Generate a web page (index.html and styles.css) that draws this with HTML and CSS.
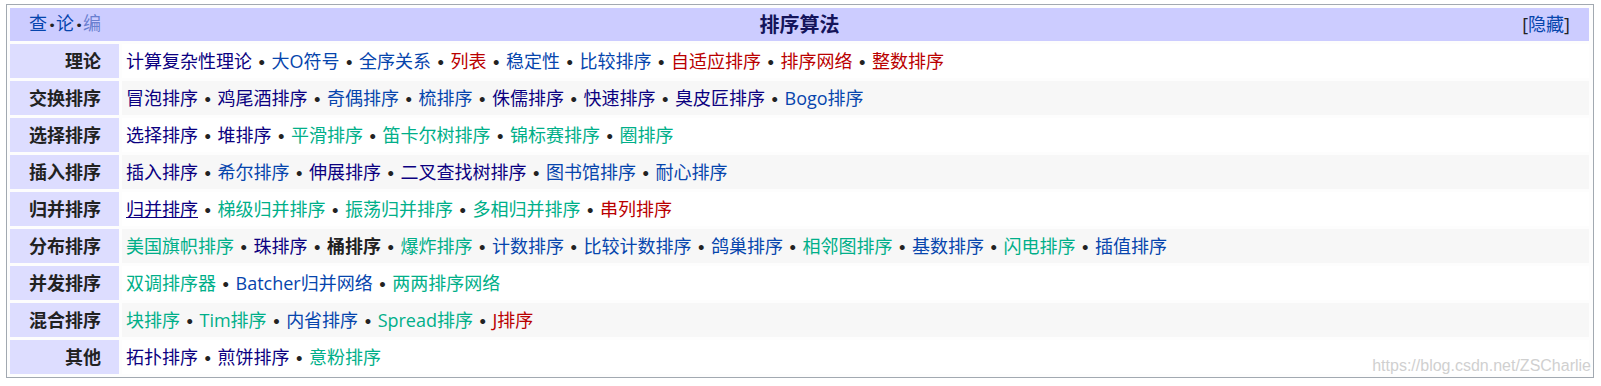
FILE: index.html
```html
<!DOCTYPE html>
<html lang="zh-CN">
<head>
<meta charset="utf-8">
<title>排序算法</title>
<link rel="stylesheet" href="styles.css">
</head>
<body>
<div class="navbox">
  <div class="navbox-inner">
    <div class="navbox-title">
      <div class="navbar"><a class="blue" href="#">查</a><span class="nsep">•</span><a class="blue" href="#">论</a><span class="nsep">•</span><a class="light" href="#">编</a></div>
      <div class="title-text">排序算法</div>
      <div class="toggle">[<a class="blue" href="#">隐藏</a>]</div>
    </div>

    <div class="group">理论</div>
    <div class="list odd"><a class="navy" href="#">计算复杂性理论</a><span class="sep">•</span><a class="blue" href="#">大O符号</a><span class="sep">•</span><a class="blue" href="#">全序关系</a><span class="sep">•</span><a class="red" href="#">列表</a><span class="sep">•</span><a class="blue" href="#">稳定性</a><span class="sep">•</span><a class="blue" href="#">比较排序</a><span class="sep">•</span><a class="red" href="#">自适应排序</a><span class="sep">•</span><a class="red" href="#">排序网络</a><span class="sep">•</span><a class="red" href="#">整数排序</a></div>

    <div class="group">交换排序</div>
    <div class="list even"><a class="navy" href="#">冒泡排序</a><span class="sep">•</span><a class="navy" href="#">鸡尾酒排序</a><span class="sep">•</span><a class="blue" href="#">奇偶排序</a><span class="sep">•</span><a class="blue" href="#">梳排序</a><span class="sep">•</span><a class="navy" href="#">侏儒排序</a><span class="sep">•</span><a class="navy" href="#">快速排序</a><span class="sep">•</span><a class="navy" href="#">臭皮匠排序</a><span class="sep">•</span><a class="blue" href="#">Bogo排序</a></div>

    <div class="group">选择排序</div>
    <div class="list odd"><a class="navy" href="#">选择排序</a><span class="sep">•</span><a class="navy" href="#">堆排序</a><span class="sep">•</span><a class="green" href="#">平滑排序</a><span class="sep">•</span><a class="green" href="#">笛卡尔树排序</a><span class="sep">•</span><a class="green" href="#">锦标赛排序</a><span class="sep">•</span><a class="green" href="#">圈排序</a></div>

    <div class="group">插入排序</div>
    <div class="list even"><a class="navy" href="#">插入排序</a><span class="sep">•</span><a class="blue" href="#">希尔排序</a><span class="sep">•</span><a class="navy" href="#">伸展排序</a><span class="sep">•</span><a class="navy" href="#">二叉查找树排序</a><span class="sep">•</span><a class="blue" href="#">图书馆排序</a><span class="sep">•</span><a class="blue" href="#">耐心排序</a></div>

    <div class="group">归并排序</div>
    <div class="list odd"><a class="navy under" href="#">归并排序</a><span class="sep">•</span><a class="green" href="#">梯级归并排序</a><span class="sep">•</span><a class="green" href="#">振荡归并排序</a><span class="sep">•</span><a class="green" href="#">多相归并排序</a><span class="sep">•</span><a class="red" href="#">串列排序</a></div>

    <div class="group">分布排序</div>
    <div class="list even"><a class="green" href="#">美国旗帜排序</a><span class="sep">•</span><a class="navy" href="#">珠排序</a><span class="sep">•</span><strong class="self">桶排序</strong><span class="sep">•</span><a class="green" href="#">爆炸排序</a><span class="sep">•</span><a class="blue" href="#">计数排序</a><span class="sep">•</span><a class="blue" href="#">比较计数排序</a><span class="sep">•</span><a class="blue" href="#">鸽巢排序</a><span class="sep">•</span><a class="green" href="#">相邻图排序</a><span class="sep">•</span><a class="blue" href="#">基数排序</a><span class="sep">•</span><a class="green" href="#">闪电排序</a><span class="sep">•</span><a class="blue" href="#">插值排序</a></div>

    <div class="group">并发排序</div>
    <div class="list odd"><a class="green" href="#">双调排序器</a><span class="sep">•</span><a class="blue" href="#">Batcher归并网络</a><span class="sep">•</span><a class="green" href="#">两两排序网络</a></div>

    <div class="group">混合排序</div>
    <div class="list even"><a class="green" href="#">块排序</a><span class="sep">•</span><a class="green" href="#">Tim排序</a><span class="sep">•</span><a class="blue" href="#">内省排序</a><span class="sep">•</span><a class="green" href="#">Spread排序</a><span class="sep">•</span><a class="red" href="#">J排序</a></div>

    <div class="group">其他</div>
    <div class="list odd"><a class="navy" href="#">拓扑排序</a><span class="sep">•</span><a class="navy" href="#">煎饼排序</a><span class="sep">•</span><a class="green" href="#">意粉排序</a></div>
  </div>
  <div class="watermark">https://blog.csdn.net/ZSCharlie</div>
</div>
</body>
</html>
```

FILE: styles.css
```css
html, body {
  margin: 0;
  padding: 0;
  background: #ffffff;
}

body {
  font-family: "Open Sans", "Noto Sans CJK SC", sans-serif;
  font-size: 18px;
  color: #222222;
}

a {
  text-decoration: none;
}

.navbox {
  position: relative;
  margin: 4px 7px 0 6px;
  border: 1px solid #a2a9b1;
  padding: 3px 4px 3px 3px;
  background: #fdfdfd;
}

.navbox-inner {
  display: grid;
  grid-template-columns: 109px 1fr;
  gap: 3px;
}

.navbox-title {
  grid-column: 1 / span 2;
  display: grid;
  grid-template-columns: 1fr auto 1fr;
  align-items: center;
  background: #ccccff;
  height: 33px;
  padding: 0 19px;
}

.navbar {
  justify-self: start;
  font-size: 18px;
  line-height: 27px;
}

.nsep {
  display: inline-block;
  width: 9px;
  text-align: right;
  font-family: "DejaVu Sans", sans-serif;
  font-size: 13px;
  color: #222222;
}

.title-text {
  font-weight: bold;
  font-size: 20px;
  line-height: 27px;
  color: #14145a;
}

.toggle {
  justify-self: end;
  font-size: 18px;
  line-height: 27px;
  color: #222222;
}

.group {
  background: #ddddff;
  font-weight: bold;
  text-align: right;
  padding: 0 18px 0 4px;
  height: 34px;
  line-height: 34px;
  color: #222222;
  white-space: nowrap;
}

.list {
  height: 34px;
  line-height: 34px;
  padding-left: 4px;
  white-space: nowrap;
}

.list.odd {
  background: #ffffff;
}

.list.even {
  background: #f7f7f7;
}

.sep {
  display: inline-block;
  width: 19.5px;
  text-align: center;
  font-family: "DejaVu Sans", sans-serif;
  font-size: 14px;
  color: #222222;
  font-weight: bold;
}

.blue { color: #0645ad; }
.navy { color: #0b0080; }
.red { color: #ba0000; }
.green { color: #00af89; }
.light { color: #6a7fd0; }
.under { text-decoration: underline; }

.self {
  font-weight: bold;
  color: #222222;
}

.watermark {
  position: absolute;
  right: 2px;
  bottom: 2px;
  font-family: "Liberation Sans", sans-serif;
  font-size: 16px;
  color: #d0d0d0;
  line-height: 18px;
}
```
